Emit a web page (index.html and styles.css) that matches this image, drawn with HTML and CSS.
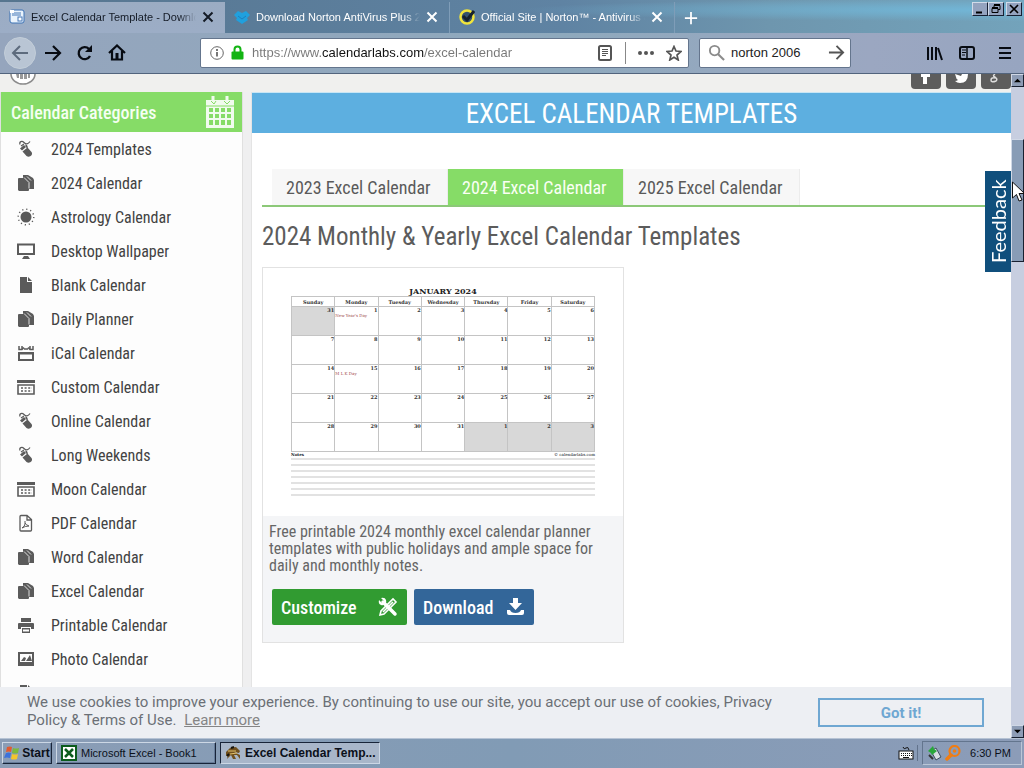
FILE: index.html
```html
<!DOCTYPE html>
<html lang="en">
<head>
<meta charset="utf-8">
<title>Excel Calendar Template - Download</title>
<link rel="stylesheet" href="styles.css">
</head>
<body>
<svg class="defs" aria-hidden="true">
  <symbol id="close" viewBox="0 0 12 12"><path d="M1.500 1.500l9 9m0-9l-9 9" fill="none" stroke="currentColor" stroke-width="2"/></symbol>
  <symbol id="mouse" viewBox="0 0 18 18"><path d="M3 4.500c-1-3 2-4 4-2s4 2 6-1M4 6l3-2" fill="none" stroke="currentColor" stroke-width="1.200"/><path d="M3 8.500l4-3.500 2 2-4 3.500zM8 4.500l2 .5 1 2.500-1.500.5zM5.500 11.500L10.500 7.500l4 4.500c2 3-2 6-5 4z" fill="currentColor"/></symbol>
  <symbol id="copies" viewBox="0 0 18 18"><path d="M6 1h5l5 3 1 2v9h-5L6 4z" fill="currentColor"/><path d="M1 5q0-1 1-1h5l5 5v7q0 1-1 1H2l-1-1z" fill="currentColor"/><path d="M7 3.500l5 5v6M10 2.500l4 4" fill="none" stroke="#fff" stroke-width=".8"/></symbol>
  <symbol id="sun" viewBox="0 0 18 18"><circle cx="9" cy="9" r="5.500" fill="currentColor"/><circle cx="9" cy="9" r="7.800" fill="none" stroke="currentColor" stroke-width="1.400" stroke-dasharray="1.200 2.884"/></symbol>
  <symbol id="desktop" viewBox="0 0 18 18"><path d="M1 2.500h16v9.500H1z" fill="none" stroke="currentColor" stroke-width="2"/><path d="M7 14h4l2 3H5z" fill="currentColor"/></symbol>
  <symbol id="sheet" viewBox="0 0 18 18"><path d="M3 1h7v5h5v11H3zM11 1l4 4h-4z" fill="currentColor"/></symbol>
  <symbol id="ical" viewBox="0 0 18 18"><path d="M1 8h16v9H1zM3 10.500V15h12v-4.500z" fill="currentColor" fill-rule="evenodd"/><path d="M2 2v3.500h3l2-2M16 2v3.500h-3l-2-2M5 2v3m8-3v3M7 5h4" fill="none" stroke="currentColor" stroke-width="1.500"/></symbol>
  <symbol id="grid" viewBox="0 0 18 18"><path d="M0 2h18v3H0z" fill="currentColor"/><path d="M1 7h16v9H1z" fill="none" stroke="currentColor" stroke-width="1.600"/><path d="M4 10h11M4 13h11" stroke="currentColor" stroke-width="1.500" stroke-dasharray="2 1.600"/></symbol>
  <symbol id="pdf" viewBox="0 0 18 18"><path d="M4 1.500h6l4.500 4V16q0 1-1 1H4q-1 0-1-1V2.500q0-1 1-1zM10 2v4h4" fill="none" stroke="currentColor" stroke-width="1.300"/><path d="M8 7v3q0 2-3 4 3-2 7-2-3-1-4-3" fill="none" stroke="currentColor"/></symbol>
  <symbol id="print" viewBox="0 0 18 18"><path d="M4 2h10v4H4zM1 8q0-1 1-1h14q1 0 1 1v5h-3v-2H4v2H1zM5 12h8v5H5zM6 13.500v2h6v-2z" fill="currentColor" fill-rule="evenodd"/></symbol>
  <symbol id="photo" viewBox="0 0 18 18"><path d="M1 2h16v14H1zM3 4v8h12V4z" fill="currentColor" fill-rule="evenodd"/><path d="M4 11l3-4 2 1-1 3zm5 0l4-6 2 6z" fill="currentColor"/></symbol>
</svg>

<header class="tabstrip">
  <div class="tab tab-active">
    <svg class="favicon" viewBox="0 0 16 16"><rect x="1" y="1" width="14" height="13" rx="2" fill="#eaf3fc" stroke="#3c72b5"/><path d="M3 4h9M3 6h9" stroke="#4779b7"/><rect x="9" y="8" width="4" height="4" fill="#fff" stroke="#4779b7"/><path d="M1 1h4v3H1z" fill="#fff"/></svg>
    <span class="tab-label">Excel Calendar Template - Downlo</span>
    <button class="tab-close" aria-label="Close tab"><svg><use href="#close"/></svg></button>
  </div>
  <div class="tab">
    <svg class="favicon" viewBox="0 0 16 16"><path d="M0 6l4-4 4 2 4-2 4 4-3 3 1 2-6 4-6-4 1-2z" fill="#20a0de"/><path d="M4 7l4 3 4-3" fill="none" stroke="#1c7fc0"/></svg>
    <span class="tab-label">Download Norton AntiVirus Plus 22</span>
    <button class="tab-close" aria-label="Close tab"><svg><use href="#close"/></svg></button>
  </div>
  <div class="tab">
    <svg class="favicon" viewBox="0 0 16 16"><circle cx="8" cy="8" r="6.500" fill="#34526c" stroke="#f1e53b" stroke-width="2.500"/><path d="M4 7l4 4 7-9" fill="none" stroke="#17232e" stroke-width="3"/></svg>
    <span class="tab-label">Official Site | Norton™ - Antivirus &amp;</span>
    <button class="tab-close" aria-label="Close tab"><svg><use href="#close"/></svg></button>
  </div>
  <button class="new-tab" aria-label="New tab"><svg viewBox="0 0 16 16"><path d="M8 1v14M1 8h14" stroke="#fff" stroke-width="2"/></svg></button>
  <div class="window-buttons">
    <button aria-label="Minimize"><svg viewBox="0 0 12 10"><path d="M2 8.500h6" stroke="#000" stroke-width="2"/></svg></button>
    <button aria-label="Restore"><svg viewBox="0 0 12 10"><path d="M4 3.500V1.500h6v4H8M2 4.500h6v4H2z" fill="none" stroke="#000"/><path d="M4 1h6M2 4h6" stroke="#000" stroke-width="2"/></svg></button>
    <button class="window-close" aria-label="Close"><svg viewBox="0 0 12 10"><path d="M2 1l8 8m0-8L2 9" stroke="#000" stroke-width="1.600"/></svg></button>
  </div>
</header>

<nav class="toolbar" aria-label="Browser">
  <div class="nav-buttons">
    <button class="back" aria-label="Back"><svg viewBox="0 0 18 18"><path d="M17 9H2m7-7L2 9l7 7" fill="none" stroke="#5d6b7d" stroke-width="2"/></svg></button>
    <button aria-label="Forward"><svg viewBox="0 0 18 18"><path d="M1 9h15M9 2l7 7-7 7" fill="none" stroke="#070b12" stroke-width="2.200"/></svg></button>
    <button aria-label="Reload"><svg viewBox="0 0 18 18"><path d="M14 12a6 6 0 1 1-1-7l2 2" fill="none" stroke="#070b12" stroke-width="2.300"/><path d="M16 1v7H9z" fill="#070b12"/></svg></button>
    <button aria-label="Home"><svg viewBox="0 0 18 18"><path d="M1 9l8-7.500L17 9M4 7v8.500h10V7" fill="none" stroke="#070b12" stroke-width="2.200"/><path d="M7.500 9h3v6h-3z" fill="#070b12"/></svg></button>
  </div>
  <div class="urlbar">
    <svg class="i-info" viewBox="0 0 14 14"><circle cx="7" cy="7" r="6.300" fill="none" stroke="#666"/><path d="M7 6v4.500M7 3v2" stroke="#555" stroke-width="1.600"/></svg>
    <svg class="i-lock" viewBox="0 0 13 15"><path d="M3.500 7V4.500a3 3 0 0 1 6 0V7" fill="none" stroke="#13b413" stroke-width="2"/><rect y="6.500" x=".5" width="12" height="8" rx="1" fill="#13b413"/></svg>
    <input class="url" aria-label="Address" value="https://www.calendarlabs.com/excel-calendar">
    <button aria-label="Reader view"><svg viewBox="0 0 16 16"><rect x="2" y="1" width="12" height="14" rx="1.500" fill="none" stroke="#555" stroke-width="2"/><path d="M5 4.500h6M5 6.500h6M5 8.500h6M5 10.500h4" stroke="#555"/></svg></button>
    <span class="divider"></span>
    <button aria-label="Page actions"><svg viewBox="0 0 16 16"><g fill="#555"><circle cx="2" cy="8" r="2"/><circle cx="8" cy="8" r="2"/><circle cx="14" cy="8" r="2"/></g></svg></button>
    <button aria-label="Bookmark"><svg viewBox="0 0 16 16"><path d="M8 1.500l2 4.500 5 .5-4 3.500 1.200 5L8 12.300 3.800 15 5 10 1 6.500 6 6z" fill="none" stroke="#555" stroke-width="1.700"/></svg></button>
  </div>
  <div class="searchbar">
    <svg viewBox="0 0 18 18"><circle cx="7" cy="7" r="5" fill="none" stroke="#8b8b8b" stroke-width="2"/><path d="M10.500 10.500L17 17" stroke="#8b8b8b" stroke-width="2.200"/></svg>
    <input aria-label="Search" value="norton 2006">
    <button aria-label="Search"><svg viewBox="0 0 18 18"><path d="M1 9h15M9 2l7 7-7 7" fill="none" stroke="#555" stroke-width="2"/></svg></button>
  </div>
  <div class="tool-buttons">
    <button aria-label="Library"><svg viewBox="0 0 16 16"><path d="M1 2v13M5 2v13M9 2v13M11 3l4 12" stroke="#070b12" stroke-width="2"/></svg></button>
    <button aria-label="Sidebars"><svg viewBox="0 0 16 16"><rect x="1" y="2" width="14" height="12" rx="2" fill="none" stroke="#070b12" stroke-width="2"/><path d="M8 2v12" stroke="#070b12" stroke-width="1.500"/><path d="M3 5h4M3 7.500h4M3 10h3" stroke="#070b12"/></svg></button>
    <button class="menu" aria-label="Menu"><svg viewBox="0 0 16 16"><path d="M2 3h12M2 8h12M2 13h12" stroke="#070b12" stroke-width="2"/></svg></button>
  </div>
</nav>

<div class="viewport">
  <div class="page">
    <div class="topstrip">
      <svg class="logo" viewBox="0 0 26 11"><path d="M1 0a12 10 0 0 0 24 0" fill="#fff" stroke="#8c8c8c" stroke-width="1.600"/><path d="M6 0h3v4H7zM10 0h3v5h-3zM14 0h3v5h-3zM18 0h2v4h-2z" fill="#999"/></svg>
      <div class="social">
        <a href="#" aria-label="Facebook"><svg viewBox="0 0 30 16"><path d="M12 0h7v3h-3v7h-4V3h-2V0z" fill="#fff"/></svg></a>
        <a href="#" aria-label="Twitter"><svg viewBox="0 0 30 16"><path d="M9 0l6 2 1-2h6q0 9-8 9-3 0-5-2 2 0 3-1-2-1-2-3z" fill="#fff"/></svg></a>
        <a href="#" aria-label="Google"><svg viewBox="0 0 30 16"><path d="M14 0q-3 2 0 3 3 2 1 4-5 2-5-1 0-3 5-2" fill="none" stroke="#ddd" stroke-width="1.500"/></svg></a>
      </div>
    </div>
    <div class="columns">
      <aside class="sidebar">
        <h2>Calendar Categories
          <svg viewBox="0 0 30 34"><path d="M1 5h28v28H1zM4 13v4h4v-4zm6 0v4h4v-4zm6 0v4h4v-4zm6 0v4h4v-4zM4 19v4h4v-4zm6 0v4h4v-4zm6 0v4h4v-4zm6 0v4h4v-4zM4 25v5h4v-5zm6 0v5h4v-5zm6 0v5h4v-5zm6 0v5h4v-5z" fill="#f1fbee" fill-rule="evenodd"/><path d="M8 1v6m14-6v6" stroke="#f1fbee" stroke-width="3"/><path d="M6 6l3 3 2-3m8 0l3 3 3-3M1 11h28" fill="none" stroke="#86dc67"/></svg>
        </h2>
        <ul>
          <li><a href="#"><svg><use href="#mouse"/></svg>2024 Templates</a></li>
          <li><a href="#"><svg><use href="#copies"/></svg>2024 Calendar</a></li>
          <li><a href="#"><svg><use href="#sun"/></svg>Astrology Calendar</a></li>
          <li><a href="#"><svg><use href="#desktop"/></svg>Desktop Wallpaper</a></li>
          <li><a href="#"><svg><use href="#sheet"/></svg>Blank Calendar</a></li>
          <li><a href="#"><svg><use href="#copies"/></svg>Daily Planner</a></li>
          <li><a href="#"><svg><use href="#ical"/></svg>iCal Calendar</a></li>
          <li><a href="#"><svg><use href="#grid"/></svg>Custom Calendar</a></li>
          <li><a href="#"><svg><use href="#mouse"/></svg>Online Calendar</a></li>
          <li><a href="#"><svg><use href="#mouse"/></svg>Long Weekends</a></li>
          <li><a href="#"><svg><use href="#grid"/></svg>Moon Calendar</a></li>
          <li><a href="#"><svg><use href="#pdf"/></svg>PDF Calendar</a></li>
          <li><a href="#"><svg><use href="#copies"/></svg>Word Calendar</a></li>
          <li><a href="#"><svg><use href="#copies"/></svg>Excel Calendar</a></li>
          <li><a href="#"><svg><use href="#print"/></svg>Printable Calendar</a></li>
          <li><a href="#"><svg><use href="#photo"/></svg>Photo Calendar</a></li>
          <li><a href="#" aria-label="More"><svg><use href="#sheet"/></svg></a></li>
        </ul>
      </aside>
      <main>
        <h1>EXCEL CALENDAR TEMPLATES</h1>
        <div class="content">
          <nav class="years" aria-label="Year">
            <a href="#">2023 Excel Calendar</a>
            <a href="#" class="current">2024 Excel Calendar</a>
            <a href="#">2025 Excel Calendar</a>
          </nav>
          <h2>2024 Monthly &amp; Yearly Excel Calendar Templates</h2>
          <article class="card">
            <div class="preview">
              <table>
                <caption>JANUARY 2024</caption>
                <thead><tr><th>Sunday</th><th>Monday</th><th>Tuesday</th><th>Wednesday</th><th>Thursday</th><th>Friday</th><th>Saturday</th></tr></thead>
                <tbody>
                <tr><td class="out">31</td><td>1<small>New Year's Day</small></td><td>2</td><td>3</td><td>4</td><td>5</td><td>6</td></tr>
                <tr><td>7</td><td>8</td><td>9</td><td>10</td><td>11</td><td>12</td><td>13</td></tr>
                <tr><td>14</td><td>15<small>M L K Day</small></td><td>16</td><td>17</td><td>18</td><td>19</td><td>20</td></tr>
                <tr><td>21</td><td>22</td><td>23</td><td>24</td><td>25</td><td>26</td><td>27</td></tr>
                <tr><td>28</td><td>29</td><td>30</td><td>31</td><td class="out">1</td><td class="out">2</td><td class="out">3</td></tr>
                </tbody>
              </table>
              <div class="notes"><b>Notes</b><span>© calendarlabs.com</span></div>
              <div class="rules"></div>
            </div>
            <p>Free printable 2024 monthly excel calendar planner templates with public holidays and ample space for daily and monthly notes.</p>
            <div class="actions">
              <button class="customize">Customize<svg viewBox="0 0 20 20"><path d="M5 5l12 12" stroke="#fff" stroke-width="3.500" stroke-linecap="round"/><path d="M1 3l3 3 2-2-3-3q4-1 5 2 1 2-1 4-2 2-4 1-3-1-2-5z" fill="#fff"/><path d="M2 18l1-4L15 2l3 3L6 17zM5 15L15 5" fill="none" stroke="#fff" stroke-width="1.600"/></svg></button>
              <button class="download">Download<svg viewBox="0 0 20 20"><path d="M8 1h5v5h4l-6.500 7L4 6h4zM2 13h3q1 3 5.500 3t5.500-3h3v3q0 2-2 2H4q-2 0-2-2z" fill="#fff"/></svg></button>
            </div>
          </article>
        </div>
      </main>
    </div>
    <div class="cookies">
      <p>We use cookies to improve your experience. By continuing to use our site, you accept our use of cookies, Privacy Policy &amp; Terms of Use. <a href="#">Learn more</a></p>
      <button>Got it!</button>
    </div>
    <button class="feedback">Feedback</button>
  </div>
  <div class="scrollbar">
    <button aria-label="Scroll up"><svg viewBox="0 0 8 8"><path d="M0 6l4-4 4 4z"/></svg></button>
    <div class="track"><div class="thumb"></div></div>
    <button aria-label="Scroll down"><svg viewBox="0 0 8 8"><path d="M0 2l4 4 4-4z"/></svg></button>
  </div>
  <svg class="cursor" viewBox="0 0 13 21"><path d="M.5 1v16l4-3.500 2.500 6.500 3-1-3-6.500h5.500z" fill="#fff" stroke="#111"/></svg>
</div>

<footer class="taskbar">
  <button class="start"><svg viewBox="0 0 16 16"><path d="M3 2q3-1 5 0L7 7Q5 6 2 7z" fill="#e35a30"/><path d="M9 3q3 1 6 0l-1 5q-3 1-6 0z" fill="#7cba3c"/><path d="M2 8q3-1 5 0l-1 5q-3-1-6 0z" fill="#3d72dc"/><path d="M8 9q3 1 6 0l-1 5q-3 1-6 0z" fill="#f5c52c"/></svg>Start</button>
  <button class="task"><svg viewBox="0 0 16 16"><path d="M1 1h14v14H1z" fill="#fff" stroke="#0c5c1d" stroke-width="2"/><path d="M4 4l8 8m0-8l-8 8" stroke="#0c5c1d" stroke-width="2.500"/></svg>Microsoft Excel - Book1</button>
  <button class="task pressed"><svg viewBox="0 0 16 16"><path d="M1 7l4-4 6-1 4 4-1 2-5-1 6 3v4l-3-4-3 0 2 4H8l-2-4-4 4 1-4-2 1z" fill="#70501e"/><path d="M3 6h8M5 9l7-1" stroke="#e3c26c"/><path d="M6 3l3-1M2 11l2-2" stroke="#17140d" stroke-width="2"/></svg>Excel Calendar Temp...</button>
  <div class="tray-left"><svg viewBox="0 0 16 16"><path d="M5 2q1 3 3 1t3 2" fill="none" stroke="#111"/><rect x="1" y="6" width="14" height="8" fill="#fff" stroke="#111"/><path d="M3 8.500h11M3 10.500h11" stroke="#111" stroke-dasharray="1 1"/><path d="M5 12.500h6" stroke="#111"/></svg></div>
  <div class="tray">
    <svg viewBox="0 0 16 16"><path d="M5 6l5-3 5 9-5 3z" fill="#d7dde2" stroke="#405060"/><path d="M2 6l5-5 1 3 3 2-5 4-1-2z" fill="#28a73a"/><path d="M3 10l4 4" stroke="#333" stroke-width="2"/></svg>
    <svg viewBox="0 0 16 16"><circle cx="9.500" cy="6" r="5" fill="none" stroke="#f07d14" stroke-width="2.200"/><circle cx="9.500" cy="6" r="1.800" fill="#f07d14"/><path d="M6 10l-4 4" stroke="#f07d14" stroke-width="3.500" stroke-linecap="round"/></svg>
    <time>6:30 PM</time>
  </div>
</footer>
</body>
</html>
```
FILE: styles.css
```css
* { box-sizing: border-box; }
body {
  margin: 0;
  height: 100vh;
  display: flex;
  flex-direction: column;
  overflow: hidden;
  font-family: "Liberation Sans", Arial, sans-serif;
  font-size: 12px;
  color: #0b101a;
}
button { font: inherit; color: inherit; padding: 0; border: 0; background: none; display: flex; align-items: center; justify-content: center; }
input { font: inherit; border: 0; padding: 0; background: none; outline: 0; width: 0; min-width: 0; }
h1, h2, p, ul { margin: 0; padding: 0; }
svg { flex: none; display: block; }
.defs { position: absolute; width: 0; height: 0; }

/* Tab strip */
.tabstrip {
  flex: none;
  height: 33px;
  padding-top: 2px;
  display: flex;
  background: radial-gradient(ellipse at 100% 30%, #72b7d8, transparent 35%), linear-gradient(90deg, #56758f, #5f83a3 55%, #6e96ae 75%, #73a3bb);
}
.tab {
  width: 225px;
  min-width: 0;
  display: flex;
  align-items: center;
  gap: 6px;
  padding: 0 11px 2px 9px;
  color: #fff;
  font-size: 11px;
  border-right: 1px solid #7f9db8;
}
.tab-active { background: linear-gradient(#9bacc3, #9cadc6); color: #141b26; border: 0; }
.favicon { width: 16px; height: 16px; }
.tab-label {
  flex: 1;
  overflow: hidden;
  white-space: nowrap;
  mask-image: linear-gradient(90deg, #000 90%, transparent);
}
.tab-close svg { width: 12px; height: 12px; }
.new-tab { width: 32px; }
.new-tab svg { width: 14px; height: 14px; }
.window-buttons { margin-left: auto; display: flex; align-items: flex-start; padding-right: 2px; }
.window-buttons button {
  width: 16px;
  height: 14px;
  background: #94a3bf;
  border: 1px solid;
  border-color: #d1dbe9 #172033 #172033 #d1dbe9;
}
.window-buttons svg { width: 12px; height: 10px; }
.window-buttons .window-close { margin-left: 2px; }

/* Navigation toolbar */
.toolbar {
  flex: none;
  height: 41px;
  display: flex;
  align-items: center;
  gap: 10px;
  padding: 0 11px 1px 4px;
  background: linear-gradient(90deg, #95a5bd, #8ea9bd 55%, #9ba7c1 85%, #97a5c0);
  border-bottom: 1px solid #52647d;
}
.nav-buttons { width: 186px; flex: none; display: flex; align-items: center; gap: 14px; }
.nav-buttons svg { width: 18px; height: 18px; }
.nav-buttons .back { width: 32px; height: 32px; margin-right: -6px; border-radius: 50%; background: #b9c5d4; border: 1px solid #c3ced9; }
.urlbar, .searchbar {
  height: 30px;
  min-width: 0;
  display: flex;
  align-items: center;
  background: #fff;
  border: 1px solid #64758d;
  border-radius: 2px;
  font-size: 13px;
}
.urlbar { flex: 472; gap: 12px; padding: 0 6px 0 9px; }
.urlbar button svg { width: 16px; height: 16px; }
.i-info { width: 14px; height: 14px; }
.i-lock { width: 13px; height: 15px; margin-left: -5px; }
.url {
  flex: 1;
  margin-left: -4px;
  color: #777;
  background: linear-gradient(90deg, #777 70px, #111 70px, #111 172px, #777 172px);
  background-clip: text;
  -webkit-text-fill-color: transparent;
}
.divider { width: 1px; height: 22px; background: #888; }
.searchbar { flex: 137; padding: 0 5px 0 8px; gap: 6px; }
.searchbar input { flex: 1; color: #222; }
.searchbar svg { width: 17px; height: 17px; }
.tool-buttons { flex: 152; display: flex; justify-content: flex-end; gap: 16px; }
.tool-buttons svg { width: 16px; height: 16px; }
.tool-buttons .menu { margin-left: 6px; }

/* Web page */
.viewport { flex: 1; min-height: 0; display: flex; position: relative; }
.page { flex: 1; min-width: 0; position: relative; display: flex; flex-direction: column; background: #efeff0; font-family: "Roboto Condensed", Roboto, sans-serif; }
.topstrip { flex: none; height: 18px; display: flex; justify-content: space-between; padding-left: 10px; background: #f0f0ee; }
.logo { width: 26px; height: 11px; }
.social { display: flex; gap: 5px; }
.social a { width: 30px; height: 15px; background: #5d5d5d; border-radius: 0 0 4px 4px; overflow: hidden; }
.columns { flex: 1; min-height: 0; overflow: hidden; display: flex; gap: 8px; }
.sidebar { width: 243px; flex: none; background: #fdfdfd; border: solid #e0e0e0; border-width: 0 1px; }
.sidebar h2 {
  height: 40px;
  display: flex;
  align-items: center;
  justify-content: space-between;
  padding: 0 7px 0 10px;
  background: #86dc67;
  color: #f5fff2;
  font-size: 18px;
  font-weight: 500;
}
.sidebar h2 svg { width: 30px; height: 34px; }
.sidebar ul { list-style: none; }
.sidebar a { display: flex; align-items: center; gap: 16px; height: 34px; padding-left: 16px; color: #424242; font-size: 16px; text-decoration: none; }
.sidebar a svg { width: 18px; height: 18px; color: #5b5b5b; }
main { flex: 1; min-width: 0; background: #fff; border-left: 1px solid #e4e4e4; }
main h1 { height: 41px; line-height: 42px; background: #5dafe0; border-top: 1px solid #c8e6f5; color: #fff; text-align: center; font-size: 27px; font-weight: 400; }
.content { padding: 36px 0 0 10px; }
.years { display: flex; padding-left: 10px; border-bottom: 2px solid #8cc878; }
.years a { width: 176px; height: 36px; display: flex; align-items: center; padding-left: 14px; background: #f7f7f7; border-right: 1px solid #ececec; color: #5a5a5a; font-size: 18px; text-decoration: none; }
.years .current { background: #86dc67; color: #fafff5; }
.content h2 { padding: 14px 0 15px; line-height: 31px; font-size: 25px; font-weight: 400; color: #5c5c5c; }
.card { width: 362px; background: #f4f5f7; border: 1px solid #e2e2e2; padding-bottom: 17px; }
.preview { height: 248px; background: #fff; padding: 18px 28px 0; font-family: "DejaVu Serif", serif; }
.preview table { width: 100%; table-layout: fixed; border-collapse: collapse; border: 1px solid #8c8c8c; }
.preview caption { height: 10px; line-height: 10px; font-size: 8px; font-weight: bold; color: #222; }
.preview th, .preview td { border: 1px solid #c4c4c4; padding: 0; line-height: 6px; font-size: 5px; color: #333; }
.preview th { height: 10px; }
.preview td { height: 29px; vertical-align: top; text-align: right; font-weight: bold; }
.preview .out { background: #d8d8d8; }
.preview small { display: block; text-align: left; font-size: 4px; font-weight: 400; color: #a04848; }
.notes { display: flex; justify-content: space-between; line-height: 6px; font-size: 4px; }
.rules { height: 38px; background: repeating-linear-gradient(#e2e2e2 0 2px, #fff 2px 6px); }
.card p { padding: 7px 6px 0; line-height: 17px; font-size: 16px; color: #666; }
.actions { display: flex; gap: 7px; padding: 15px 9px 0; }
.actions button { height: 36px; justify-content: space-between; padding: 0 9px; border-radius: 2px; color: #fff; font-size: 18px; font-weight: 500; }
.actions svg { width: 20px; height: 20px; }
.customize { width: 135px; background: #319b31; }
.download { width: 120px; background: #336699; }
.cookies { flex: none; height: 51px; display: flex; justify-content: space-between; padding: 6px 27px 0; background: #edeff3; color: #6b6f76; font-family: Roboto, sans-serif; font-size: 15px; line-height: 18px; }
.cookies p { max-width: 780px; }
.cookies a { color: #858585; margin-left: 4px; }
.cookies button { flex: none; width: 166px; height: 29px; margin-top: 5px; border: 2px solid #6fa7d2; color: #6fa7d2; font-weight: 700; }
.feedback { position: absolute; right: 0; top: 97px; width: 26px; height: 101px; background: #104f7c; color: #fff; font-family: Lato, sans-serif; font-size: 20px; writing-mode: vertical-rl; transform: rotate(180deg); }
.scrollbar { width: 13px; display: flex; flex-direction: column; background: #c7cee0; }
.scrollbar button { height: 13px; background: #8d9cb5; border: 1px solid; border-color: #d0d8e6 #182030 #182030 #d0d8e6; }
.scrollbar svg { width: 7px; height: 7px; }
.track { flex: 1; padding-top: 52px; }
.thumb { height: 123px; background: #889cb6; border: 1px solid; border-color: #d0d8e6 #182030 #182030 #d0d8e6; }
.cursor { position: absolute; right: -1px; top: 107px; width: 13px; height: 21px; }

/* Taskbar */
.taskbar { flex: none; height: 30px; display: flex; align-items: center; gap: 4px; padding: 0 2px 1px; background: linear-gradient(90deg, #8b9db6, #819bb5 50%, #8c9cb8); border-top: 1px solid #b6c3d4; }
.taskbar button { height: 22px; border: 1px solid; border-color: #ccd7e5 #182438 #182438 #ccd7e5; box-shadow: inset -1px -1px #667b98; }
.taskbar svg { width: 16px; height: 16px; }
.start { width: 50px; gap: 2px; font-weight: bold; }
.taskbar .task { width: 160px; justify-content: flex-start; gap: 4px; padding-left: 4px; font-size: 11px; }
.taskbar .pressed { border-color: #182438 #ccd7e5 #ccd7e5 #182438; box-shadow: none; background: #a8b6c9; font-weight: bold; font-size: 12px; }
.tray-left { margin-left: auto; padding-right: 3px; border-right: 1px solid #62738c; }
.tray { height: 24px; display: flex; align-items: center; gap: 3px; padding: 0 10px 0 3px; border: 1px solid; border-color: #63758e #bac6d6 #bac6d6 #63758e; }
.tray time { padding-left: 6px; font-size: 11px; white-space: nowrap; }
```
